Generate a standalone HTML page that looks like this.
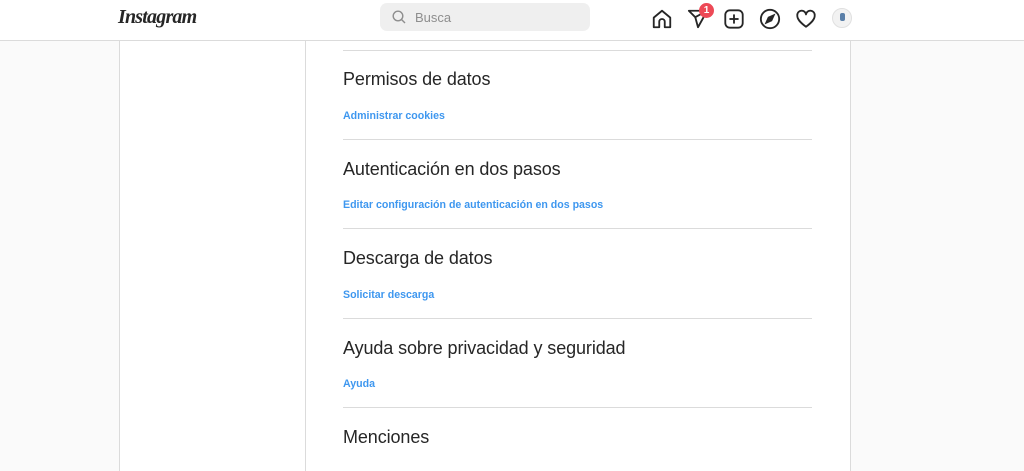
<!DOCTYPE html>
<html><head><meta charset="utf-8"><style>
*{margin:0;padding:0;box-sizing:border-box}
body{width:1024px;height:465px;overflow:hidden;background:#fafafa;font-family:"Liberation Sans",sans-serif;position:relative}
.hdr{position:absolute;left:0;top:0;width:1024px;height:41px;background:#fff;border-bottom:1px solid #dbdbdb}
.logo{position:absolute;left:118px;top:6px;font-family:"Liberation Serif",serif;font-style:italic;font-weight:bold;font-size:20px;color:#262626;letter-spacing:-0.8px}
.search{position:absolute;left:380px;top:3px;width:210px;height:28px;background:#efefef;border-radius:7px}
.search span{position:absolute;left:35px;top:7px;font-size:13px;color:#8e8e8e}
.ic{position:absolute;top:8px}
.main{position:absolute;left:119px;top:41px;width:732px;height:430px;background:#fff;border-left:1px solid #dbdbdb;border-right:1px solid #dbdbdb}
.side{position:absolute;left:305px;top:41px;width:1px;height:430px;background:#dbdbdb}
.line{position:absolute;left:343px;width:469px;height:1px;background:#dbdbdb}
.t{position:absolute;left:343px;font-size:18px;color:#262626;letter-spacing:-0.1px}
.l{position:absolute;left:343px;font-size:10.6px;font-weight:bold;color:#3e97ef}
</style></head><body>
<div class="hdr">
<div class="logo">Instagram</div>
<div class="search">
<svg style="position:absolute;left:12px;top:7px" width="14" height="14" viewBox="0 0 14 14" fill="none" stroke="#8e8e8e" stroke-width="1.4"><circle cx="6" cy="6" r="4.8"/><line x1="9.5" y1="9.5" x2="13" y2="13"/></svg>
<span>Busca</span></div>
<svg class="ic" style="left:651px" width="22" height="22" viewBox="0 0 24 24" fill="none" stroke="#262626" stroke-width="2" stroke-linejoin="round"><path d="M3 10.5L12 3l9 7.5V21h-6v-6a3 3 0 0 0-6 0v6H3z"/></svg>
<svg class="ic" style="left:687px" width="22" height="22" viewBox="0 0 24 24" fill="none" stroke="#262626" stroke-width="2" stroke-linejoin="round"><path d="M22 3L2 3l7 7 3 11z"/><line x1="9" y1="10" x2="22" y2="3"/></svg>
<div style="position:absolute;left:699px;top:3px;width:15px;height:15px;border-radius:50%;background:#ed4956;color:#fff;font-size:10px;font-weight:bold;text-align:center;line-height:15px">1</div>
<svg class="ic" style="left:723px" width="22" height="22" viewBox="0 0 24 24" fill="none" stroke="#262626" stroke-width="2"><rect x="2.5" y="2.5" width="19" height="19" rx="5"/><line x1="12" y1="7" x2="12" y2="17"/><line x1="7" y1="12" x2="17" y2="12"/></svg>
<svg class="ic" style="left:759px" width="22" height="22" viewBox="0 0 24 24" fill="none" stroke="#262626" stroke-width="2"><circle cx="12" cy="12" r="10"/><path d="M16 8l-2.5 5.5L8 16l2.5-5.5z" fill="#262626"/></svg>
<svg class="ic" style="left:795px" width="22" height="22" viewBox="0 0 24 24" fill="none" stroke="#262626" stroke-width="2" stroke-linejoin="round"><path d="M12 20.5C6 16 2.5 12.5 2.5 8.5a4.8 4.8 0 0 1 9.5-1.5 4.8 4.8 0 0 1 9.5 1.5c0 4-3.5 7.5-9.5 12z"/></svg>
<div style="position:absolute;left:832px;top:8px;width:20px;height:20px;border-radius:50%;background:#f2f2f2;border:1px solid #e0e0e0">
<div style="position:absolute;left:7px;top:4px;width:5px;height:8px;background:#5a7fa8;border-radius:2px"></div></div>
</div>
<div class="main"></div>
<div class="side"></div>
<div class="line" style="top:50px"></div>
<div class="t" style="top:69px">Permisos de datos</div>
<div class="l" style="top:110px">Administrar cookies</div>
<div class="line" style="top:139px"></div>
<div class="t" style="top:159px">Autenticación en dos pasos</div>
<div class="l" style="top:199px">Editar configuración de autenticación en dos pasos</div>
<div class="line" style="top:228px"></div>
<div class="t" style="top:248px">Descarga de datos</div>
<div class="l" style="top:289px">Solicitar descarga</div>
<div class="line" style="top:318px"></div>
<div class="t" style="top:338px">Ayuda sobre privacidad y seguridad</div>
<div class="l" style="top:378px">Ayuda</div>
<div class="line" style="top:407px"></div>
<div class="t" style="top:427px">Menciones</div>
</body></html>
